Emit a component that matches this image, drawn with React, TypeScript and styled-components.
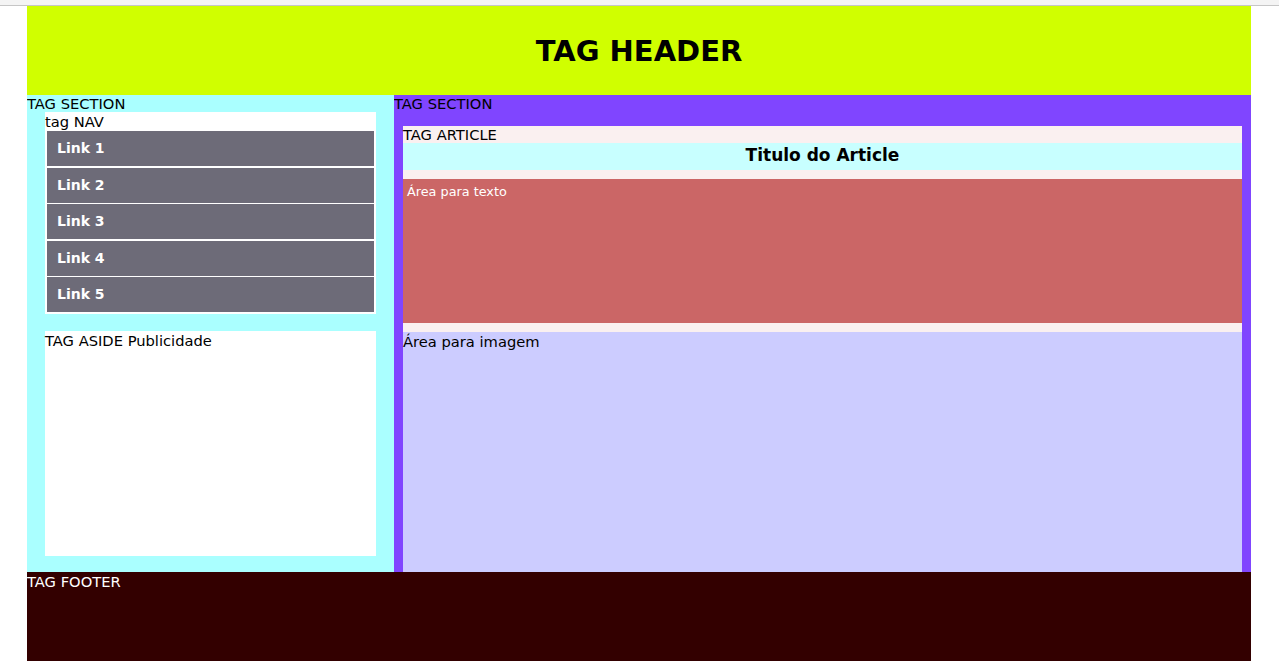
import React from "react";
import styled, { createGlobalStyle } from "styled-components";

const Global = createGlobalStyle`
  html, body { margin: 0; padding: 0; background: #ffffff; }
  body { font-family: "DejaVu Sans", Verdana, sans-serif; font-size: 14.7px; color: #000; }
  * { box-sizing: border-box; }
`;

const TopStrip = styled.div`
  height: 6px;
  background: #f4f4f4;
  border-bottom: 1px solid #c6c6c6;
`;

const Page = styled.div`
  width: 1224px;
  margin: 0 0 0 27px;
  display: flex;
  flex-direction: column;
`;

const Header = styled.header`
  height: 89px;
  background: #d0ff00;
  display: flex;
  align-items: center;
  justify-content: center;
`;

const HeaderTitle = styled.h1`
  margin: 0;
  font-size: 29px;
  font-weight: bold;
  line-height: 1;
  padding-top: 1px;
`;

const Main = styled.div`
  display: flex;
  height: 477px;
`;

const Section = styled.section<{ $bg: string; $w: number }>`
  width: ${(p) => p.$w}px;
  background: ${(p) => p.$bg};
  display: flex;
  flex-direction: column;
  overflow: hidden;
`;

const Label = styled.div<{ $color?: string }>`
  line-height: 17px;
  height: 17px;
  color: ${(p) => p.$color || "#000"};
  white-space: nowrap;
`;

const Nav = styled.nav`
  margin: 0 18px;
  background: #ffffff;
  display: flex;
  flex-direction: column;
  padding: 0 2px 0.5px;
`;

const NavLabel = styled.div`
  line-height: 18px;
  height: 19px;
  margin-left: -2px;
  padding-top: 1px;
`;

const NavLink = styled.a`
  display: block;
  height: 35px;
  margin-bottom: 1.6px;
  background: #6d6b78;
  color: #ffffff;
  font-size: 14px;
  font-weight: bold;
  line-height: 35px;
  padding-left: 10px;
  text-decoration: none;
`;

const Aside = styled.aside`
  margin: 17px 18px 0;
  height: 225px;
  background: #ffffff;
  line-height: 17px;
  padding-top: 1px;
`;

const Article = styled.article`
  margin: 14px 9px 0;
  flex: 1;
  background: #faf0f0;
  display: flex;
  flex-direction: column;
`;

const ArticleTitle = styled.h3`
  margin: 0 0 9px;
  height: 27px;
  background: #c8ffff;
  font-size: 17px;
  font-weight: bold;
  text-align: center;
  line-height: 24px;
`;

const TextArea = styled.div`
  height: 144px;
  background: #cb6666;
  color: #ffffff;
  font-size: 12.8px;
  padding: 5px 4px;
  margin-bottom: 9px;
`;

const ImageArea = styled.div`
  flex: 1;
  background: #ccccff;
  line-height: 18px;
  padding-top: 1px;
`;

const Footer = styled.footer`
  height: 110px;
  background: #330000;
  color: #ffffff;
  padding-top: 1px;
`;

export default function App() {
  const links = ["Link 1", "Link 2", "Link 3", "Link 4", "Link 5"];
  return (
    <>
      <Global />
      <TopStrip />
      <Page>
        <Header>
          <HeaderTitle>TAG HEADER</HeaderTitle>
        </Header>
        <Main>
          <Section $bg="#aaffff" $w={367}>
            <Label>TAG SECTION</Label>
            <Nav>
              <NavLabel>tag NAV</NavLabel>
              {links.map((l) => (
                <NavLink key={l} href="#">
                  {l}
                </NavLink>
              ))}
            </Nav>
            <Aside>TAG ASIDE Publicidade</Aside>
          </Section>
          <Section $bg="#8045ff" $w={857}>
            <Label>TAG SECTION</Label>
            <Article>
              <Label>TAG ARTICLE</Label>
              <ArticleTitle>Titulo do Article</ArticleTitle>
              <TextArea>Área para texto</TextArea>
              <ImageArea>Área para imagem</ImageArea>
            </Article>
          </Section>
        </Main>
        <Footer>
          <Label $color="#ffffff">TAG FOOTER</Label>
        </Footer>
      </Page>
    </>
  );
}
